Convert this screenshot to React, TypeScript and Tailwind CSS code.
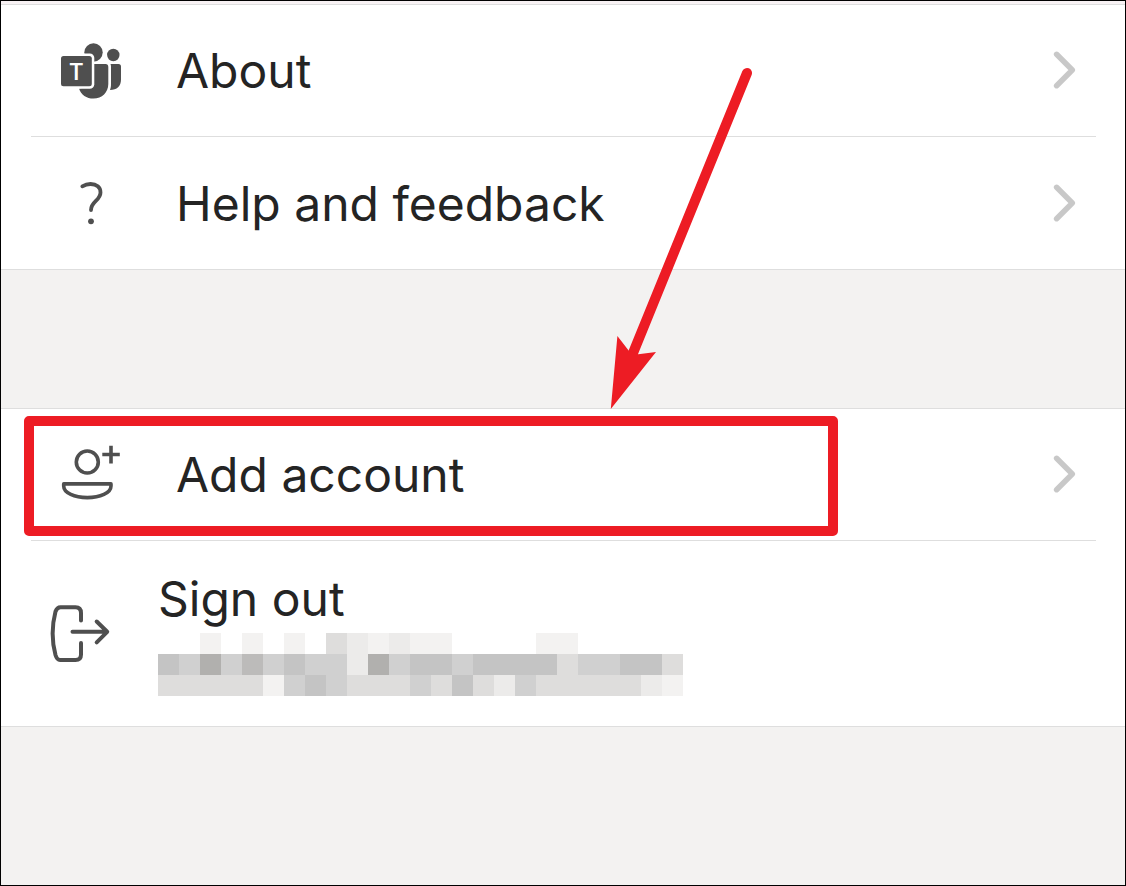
import type { ReactNode } from "react";

interface RowProps {
  icon: ReactNode;
  label: string;
  divider?: boolean;
  highlighted?: boolean;
}

// One letter per mosaic cell, darkest (a) to lightest (g); "." is empty.
const MOSAIC_ROWS = [
  "..g.g.g.efgfgg....gg.....",
  "cdadbdcddfadccdccccedd" + "cce",
  "eeeeegdcdeeedecefdeeeeefg",
];

const SHADES: Record<string, string> = {
  a: "bg-[#b1b0ae]",
  b: "bg-[#bcbbba]",
  c: "bg-[#c4c4c4]",
  d: "bg-[#d0d0d0]",
  e: "bg-[#dedddc]",
  f: "bg-[#ecebea]",
  g: "bg-[#f3f2f1]",
  ".": "bg-white",
};

function TeamsIcon() {
  return (
    <svg viewBox="0 0 64 60" className="h-[60px] w-16 shrink-0" fill="#4f4f4f" aria-hidden="true">
      <circle cx="33.5" cy="11.5" r="9.2" />
      <circle cx="53.3" cy="14" r="6.2" />
      <path d="M34 23H45.5Q48.3 23 48.3 26V43C48.3 51.5 42 57.6 33.5 57.6C26.500 57.6 21 54 19 47.5L34 45Z" />
      <path d="M50.5 23H58.5Q61 23 61 25.5V38.5C61 45 57 49 50 49C50.7 47 51 45.5 51 43V25.5Q51 24 50.5 23Z" />
      <rect x="-1.5" y="12.500" width="35.8" height="35.2" rx="4.5" fill="#fff" />
      <rect x="1" y="15" width="30.8" height="30.2" rx="2.5" />
      <text
        x="16.4"
        y="38.5"
        textAnchor="middle"
        fill="#fff"
        className="font-['Open_Sans'] text-[24px] font-semibold"
      >
        T
      </text>
    </svg>
  );
}

function QuestionIcon() {
  return (
    <svg viewBox="0 0 64 60" className="h-[60px] w-16 shrink-0" fill="none" aria-hidden="true">
      <path
        d="M22.3 12.3C25 10.7 27.8 10 30.5 10C36.5 10 40.5 13.3 40.5 18.5C40.5 26.5 31 27.5 31 36"
        stroke="#4f4f4f"
        strokeWidth="3.8"
        strokeLinecap="round"
      />
      <circle cx="31" cy="47.3" r="2.9" fill="#4f4f4f" />
    </svg>
  );
}

function AddPersonIcon() {
  return (
    <svg
      viewBox="0 0 64 60"
      className="h-[60px] w-16 shrink-0"
      fill="none"
      stroke="#4f4f4f"
      strokeWidth="3.6"
      strokeLinejoin="round"
      aria-hidden="true"
    >
      <circle cx="27.3" cy="17" r="11" />
      <path d="M42.3 9.5H59.8M51 0.7V18.4" />
      <path d="M3.7 38.9H51V41C51 48 40 52.6 27.3 52.6S3.7 48 3.7 41Z" />
    </svg>
  );
}

function SignOutIcon() {
  return (
    <svg
      viewBox="0 0 64 61"
      className="h-[61px] w-16 shrink-0"
      fill="none"
      stroke="#4f4f4f"
      strokeWidth="4"
      strokeLinecap="round"
      strokeLinejoin="round"
      aria-hidden="true"
    >
      <path d="M31 18.5V11Q31 5.2 25.5 5.2H10.5Q7 5.2 5.500 9.5C2 23 2 40 5.5 53Q7 58 10 58H25.5Q31 58 31 52.5V41" />
      <path d="M22.5 29.8H57M46.700 19.5L57.2 29.8L46.7 40.3" />
    </svg>
  );
}

function Chevron() {
  return (
    <svg viewBox="0 0 28 40" className="h-10 w-7 shrink-0" fill="none" aria-hidden="true">
      <path
        d="M4.6 3.3L20.3 19L4.6 34.7"
        stroke="#c8c8c8"
        strokeWidth="5.5"
        strokeLinecap="round"
        strokeLinejoin="round"
      />
    </svg>
  );
}

function Row({ icon, label, divider, highlighted }: RowProps) {
  return (
    <li
      className={
        divider ? "relative mr-[29px] ml-[30px] border-b border-[#dedede]" : "relative mr-[29px] ml-[30px]"
      }
    >
      <button
        type="button"
        className={
          divider
            ? "flex w-full items-center gap-[52px] pt-9 pr-4 pb-[35px] pl-[29px] text-left"
            : "flex w-full items-center gap-[52px] pt-[37px] pr-4 pb-[35px] pl-[29px] text-left"
        }
      >
        {icon}
        <span className="flex-1">{label}</span>
        <Chevron />
      </button>
      {highlighted && (
        <div className="pointer-events-none absolute top-[7px] -left-[7px] h-[120px] w-[814px] rounded-[5px] border-10 border-[#ed1c24]" />
      )}
    </li>
  );
}

function HiddenEmail() {
  return (
    <span className="mt-1 flex flex-col" aria-hidden="true">
      {MOSAIC_ROWS.map((row, y) => (
        <span key={y} className="flex">
          {row.split("").map((shade, x) => (
            <span key={x} className={`h-[21px] w-[21px] ${SHADES[shade]}`} />
          ))}
        </span>
      ))}
    </span>
  );
}

function Arrow() {
  return (
    <svg
      viewBox="0 0 160 350"
      className="pointer-events-none absolute top-[63px] left-[599px] h-[350px] w-[160px]"
      aria-hidden="true"
    >
      <path d="M147 9L31 294" stroke="#ed1c24" strokeWidth="10" strokeLinecap="round" />
      <path d="M10.8 345L17.4 272L29 287L38.3 290.3L56 288Z" fill="#ed1c24" />
    </svg>
  );
}

export default function App() {
  return (
    <main className="relative min-h-screen border border-black bg-[#f3f2f1] font-['Inter',sans-serif] text-[48px] leading-[60px] text-[#242424]">
      <div className="h-[3px] bg-[#f8f2f4]" />
      <ul className="border-y border-[#dedede] bg-white">
        <Row icon={<TeamsIcon />} label="About" divider />
        <Row icon={<QuestionIcon />} label="Help and feedback" />
      </ul>

      <ul className="mt-[138px] border-y border-[#dedede] bg-white">
        <Row icon={<AddPersonIcon />} label="Add account" divider highlighted />
        <li className="mr-[29px] ml-[30px]">
          <button type="button" className="flex w-full items-center gap-11 pt-7 pb-[30px] pl-[19px] text-left">
            <SignOutIcon />
            <span>
              <span className="block">Sign out</span>
              <HiddenEmail />
            </span>
          </button>
        </li>
      </ul>

      <Arrow />
    </main>
  );
}
